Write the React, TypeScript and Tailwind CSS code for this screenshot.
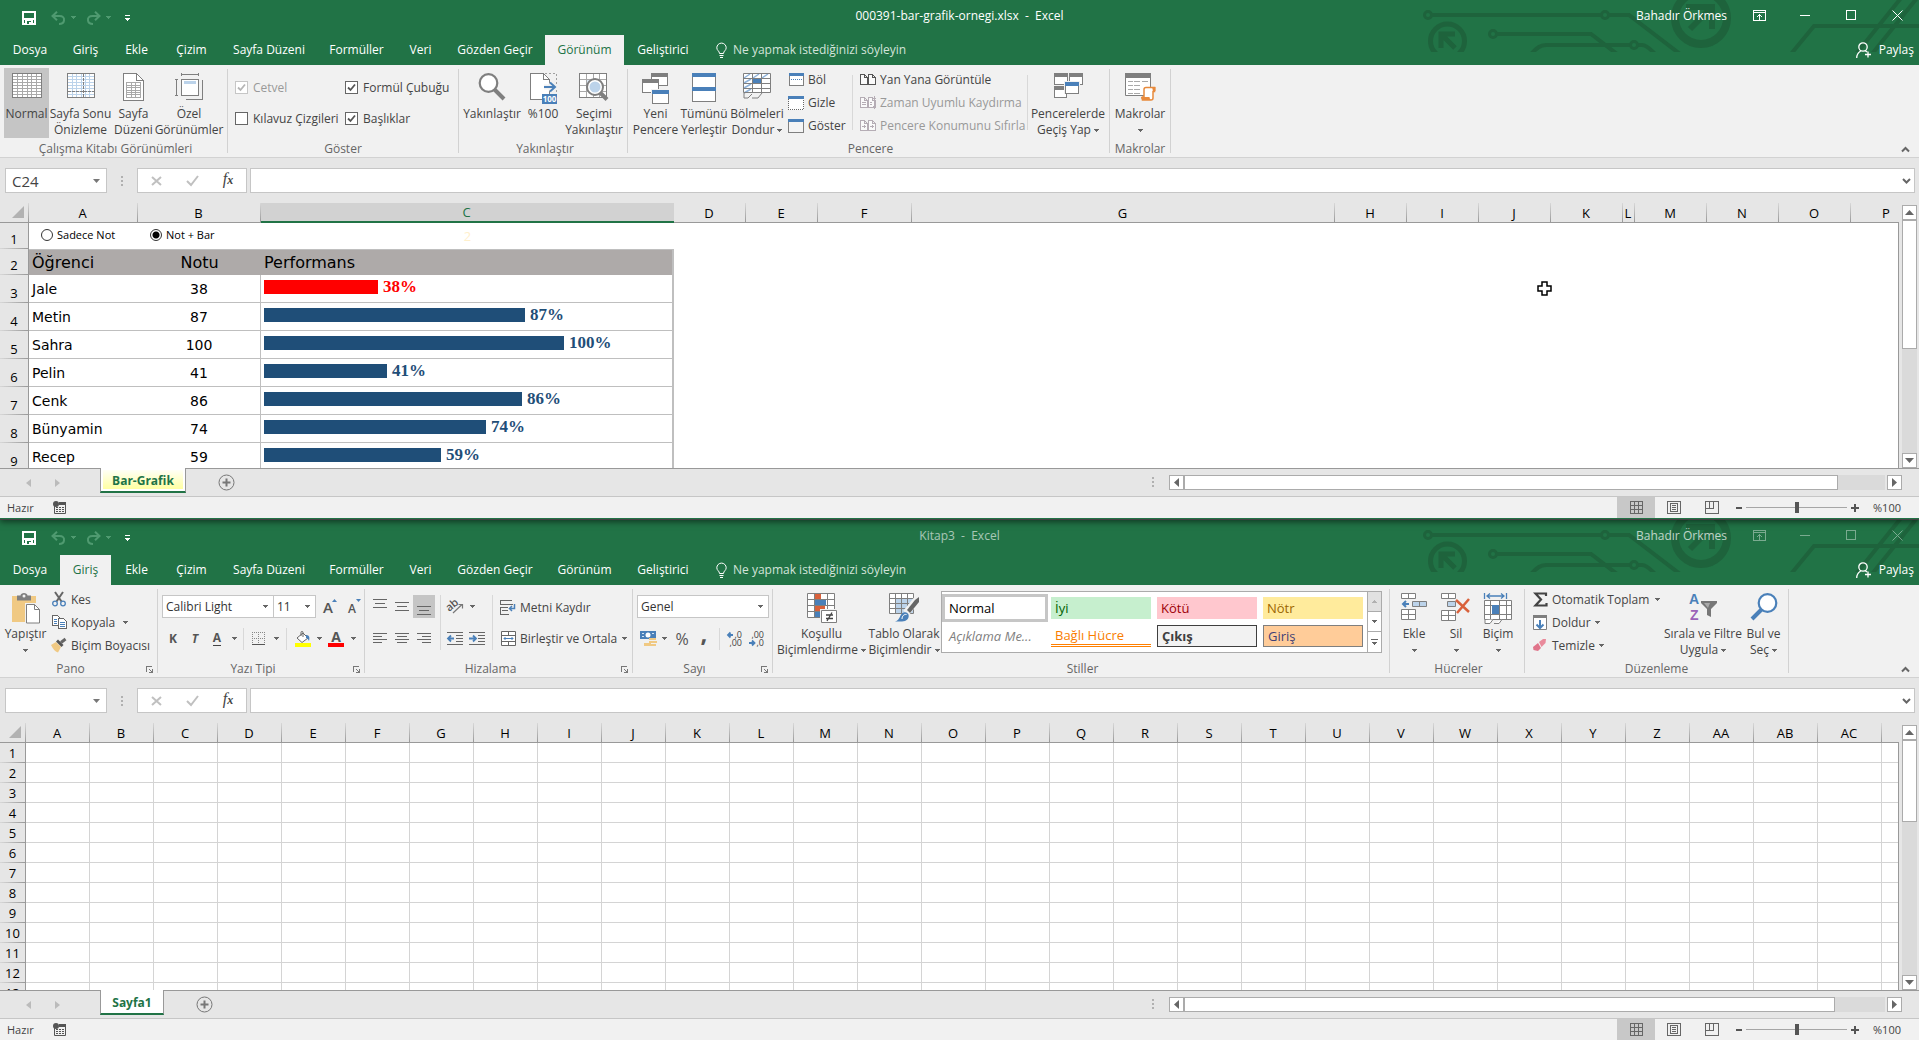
import React from "react";

type Kids = { children?: React.ReactNode };

/* ---------- drawing helpers ---------- */

function Svg({ w, h, crisp = true, children }: Kids & { w: number; h: number; crisp?: boolean }) {
  return (
    <svg
      width={w}
      height={h}
      viewBox={`0 0 ${w} ${h}`}
      fill="none"
      aria-hidden="true"
      className="shrink-0 overflow-visible"
      shapeRendering={crisp ? "crispEdges" : "auto"}
    >
      {children}
    </svg>
  );
}

const G = "#7f7f7f";
const B = "#4a80b9";

function Caret({ color = "#666" }: { color?: string }) {
  return (
    <Svg w={5} h={3}>
      <path d="M0 0h5v1h-1v1h-1v1h-1v-1h-1v-1h-1z" fill={color} />
    </Svg>
  );
}

function gridLines(x0: number, y0: number, x1: number, y1: number, cols: number, rows: number) {
  let d = "";
  for (let i = 1; i < cols; i++) {
    const x = Math.round(x0 + ((x1 - x0) * i) / cols - 0.5) + 0.5;
    d += `M${x} ${y0}V${y1}`;
  }
  for (let i = 1; i < rows; i++) {
    const y = Math.round(y0 + ((y1 - y0) * i) / rows - 0.5) + 0.5;
    d += `M${x0} ${y}H${x1}`;
  }
  return d;
}

/* ---------- title bar icons ---------- */

const SaveIcon = () => (
  <Svg w={14} h={14}>
    <path d="M1 1h12v12h-12zM2 8h10" stroke="#fff" strokeWidth={2} />
    <path d="M3 9h8v4h-8z" fill="#fff" />
    <path d="M5 10h4v3h-4z" fill="#217346" />
    <path d="M7 11h2v2h-2z" fill="#fff" />
  </Svg>
);

const UndoIcon = ({ flip = false }: { flip?: boolean }) => (
  <svg width="15" height="14" viewBox="0 0 15 14" fill="none" className={flip ? "-scale-x-100" : ""} aria-hidden="true">
    <path d="M1.500 5h7c3 0 5 1.500 4.500 4.500C12.700 11.500 10.500 13 8 13" stroke="#4f9a70" strokeWidth="2" />
    <path d="M6 0.800L1.500 5L6 9.200" stroke="#4f9a70" strokeWidth="2" />
  </svg>
);

const Circuit = () => (
  <svg width="496" height="52" viewBox="0 0 496 52" fill="none" stroke="#1e633c" aria-hidden="true">
    <g strokeWidth="4">
      <circle cx="5" cy="15" r="3.500" strokeWidth="3" />
      <circle cx="182" cy="15" r="3.500" strokeWidth="3" />
      <path d="M9 15H178M186 15H206L257 54" />
      <circle cx="70" cy="34" r="3.500" strokeWidth="3" />
      <path d="M74 34H168L194 54" />
      <path d="M108 54C114 48 117 45 123 45H207M215 45H219C224 45 228 50 232 54" />
      <circle cx="211" cy="45" r="3.500" strokeWidth="3" />
      <circle cx="24.500" cy="41" r="17" strokeWidth="5" />
      <path d="M18 48V34H32M18 34L32 48" strokeWidth="5" />
      <circle cx="278" cy="18" r="26" strokeWidth="8" />
      <path d="M263 7H289V29M288 8L267 29" strokeWidth="6" />
      <path d="M368 54L391 26H496" />
      <path d="M478 -2L433 54M494 -2L449 54" />
    </g>
  </svg>
);

/* ---------- ribbon: view tab icons ---------- */

const NormalViewIcon = () => (
  <Svg w={30} h={26}>
    <path d="M.5 .5h29v24h-29z" fill="#fff" stroke={G} />
    <path d={gridLines(1, 1, 29, 24, 6, 8)} stroke="#a9a9a9" />
  </Svg>
);
const PageBreakIcon = () => (
  <Svg w={28} h={26}>
    <path d="M.5 .5h27v24h-27z" fill="#fff" stroke={G} />
    <path d={gridLines(1, 1, 27, 24, 6, 8)} stroke="#bcd3ea" />
    <path d="M16.500 1V24M1 18.500H27" stroke={G} strokeDasharray="3 1" />
  </Svg>
);
const PageLayoutIcon = () => (
  <Svg w={21} h={28}>
    <path d="M.5 .5h13l7 7v19.500h-20z" fill="#fff" stroke={G} />
    <path d="M13.500 .5v7h7" stroke={G} />
    <path d="M3.500 9.500h14v15h-14z" stroke="#a9a9a9" />
    <path d={gridLines(4, 10, 17, 24, 3, 6)} stroke="#a9a9a9" />
  </Svg>
);
const CustomViewIcon = () => (
  <Svg w={29} h={28}>
    <path d="M6 1.500H24M6.500 0V3M23.500 0V3M1.500 6V23M0 6.500H3M0 22.500H3" stroke={G} />
    <path d="M11 26.500H27.500V7" stroke={G} />
    <path d="M6.500 6.500h17v16h-17z" fill="#fff" stroke={G} />
    <path d="M9 8h12v3h-12z" fill="#bcd3ea" />
  </Svg>
);
const GlassIcon = ({ color = G, flip = false }: { color?: string; flip?: boolean }) => (
  <svg width="28" height="28" viewBox="0 0 28 28" fill="none" className={flip ? "-scale-x-100" : ""} aria-hidden="true">
    <circle cx="10.500" cy="10" r="8.800" fill="#fff" stroke={color} strokeWidth="2.200" />
    <path d="M16.500 16.500L26 26" stroke={color} strokeWidth="4" />
  </svg>
);
const Zoom100Icon = () => (
  <svg width="27" height="31" viewBox="0 0 27 31" fill="none" className="overflow-visible" aria-hidden="true">
    <g shapeRendering="crispEdges">
      <path d="M.5 .5h13l6 6v20h-19z" fill="#fff" stroke={G} />
      <path d="M13.500 .5v6h6" stroke={G} />
      <path d="M15 .5h11.500v20" stroke="#a0a0a0" strokeDasharray="2 2" />
      <path d="M12 21h15v10h-15z" fill={B} />
    </g>
    <path d="M14 14h10M20 9.500l5 4.500l-5 4.500" stroke="#f1f1f1" strokeWidth="5" />
    <path d="M14 14h10M20 9.500l5 4.500l-5 4.500" stroke={B} strokeWidth="2" />
    <text x="19.500" y="29" textAnchor="middle" fontSize="8" fontWeight="700" fontFamily="Open Sans, sans-serif" fill="#fff">
      100
    </text>
  </svg>
);
const ZoomSelIcon = () => (
  <svg width="30" height="30" viewBox="0 0 30 30" fill="none" aria-hidden="true">
    <g shapeRendering="crispEdges">
      <path d="M.5 .5h27v24h-27z" fill="#fff" stroke={G} />
      <path d={gridLines(1, 1, 27, 24, 4, 4)} stroke="#a9a9a9" />
      <path d="M8 7h12v11h-12z" fill="#dbe7f4" />
    </g>
    <circle cx="16" cy="14" r="8" fill="#fff" stroke={G} strokeWidth="2" />
    <circle cx="16" cy="14" r="5.500" fill="#bcd3ea" />
    <path d="M21.500 20L28 26.500" stroke={G} strokeWidth="4" />
  </svg>
);
const Win = ({ x, y, w, h, c }: { x: number; y: number; w: number; h: number; c: string }) => (
  <g>
    <path d={`M${x} ${y}h${w}v${h}h-${w}z`} fill={G} />
    <path d={`M${x} ${y}h${w}v4h-${w}z`} fill={c} />
    <path d={`M${x + 1} ${y + 4}h${w - 2}v${h - 5}h-${w - 2}z`} fill="#fff" />
  </g>
);
const NewWindowIcon = () => (
  <Svg w={28} h={31}>
    <Win x={9} y={0} w={17} h={13} c={G} />
    <Win x={0} y={6} w={17} h={14} c={G} />
    <path d="M9 16h18v15h-18z" fill="#f1f1f1" />
    <Win x={10} y={17} w={17} h={14} c={B} />
  </Svg>
);
const ArrangeIcon = () => (
  <Svg w={24} h={29}>
    <path d="M0 0h24v29h-24z" fill={G} />
    <path d="M1 4h22v10h-22zM1 18h22v10h-22z" fill="#fff" />
    <path d="M0 0h24v4h-24zM0 14h24v4h-24z" fill={B} />
  </Svg>
);
const FreezeIcon = () => (
  <Svg w={29} h={27} crisp={false}>
    <path d="M.5 .5h27v19h-27z" fill="#fff" />
    <path d="M1 5l6-4M10 5l6-4M19 5l6-4M1 10l7-4M1 15l7-4M1 20l7-4" stroke="#8fb2d9" strokeWidth={1.500} />
    <path d="M.5 .5h27v19h-27zM.5 5.500h27M.5 10.500h27M.5 15.500h27M9.500 .5v19M18.500 .5v19" stroke={G} />
    <path d="M10 6h8v4h-8z" fill={B} />
    <path d="M1 20v5h4l4-4M9 25h6l4-5" stroke={G} />
  </Svg>
);
const SplitIcon = () => (
  <Svg w={15} h={13}>
    <path d="M.5 .5h14v12h-14z" fill="#fff" stroke={G} />
    <path d="M0 0h15v3h-15z" fill={B} />
    <path d="M2 6.500h11" stroke={B} strokeDasharray="1 1" />
  </Svg>
);
const HideIcon = () => (
  <Svg w={16} h={14}>
    <path d="M.5 3v10.500h15v-10" stroke="#666" strokeDasharray="1 1" fill="#fff" />
    <path d="M0 0h16v3h-16z" fill={B} />
  </Svg>
);
const ShowIcon = () => (
  <Svg w={16} h={14}>
    <path d="M.5 .5h15v13h-15z" fill="#f4f4f4" stroke={G} />
    <path d="M0 0h16v3h-16z" fill={B} />
  </Svg>
);
const SideBySideIcon = ({ c = "#555", kind = 0 }: { c?: string; kind?: number }) => (
  <Svg w={16} h={13}>
    <path d="M.5 1.500h4l3 3v7h-7zM8.500 1.500h4l3 3v7h-7zM4.500 1.500v3h3M12.500 1.500v3h3" stroke={c} fill="#fafafa" />
    {kind === 1 && <path d="M2 6.500h4M2 8.500h4M10 6.500h2M10 8.500h2M14.500 0v13M13 2.500h3M13 10.500h3" stroke={c} />}
    {kind === 2 && <path d="M2 7.500h4M4 6v3M10 7.500h4M12 6v3" stroke={c} />}
  </Svg>
);
const SwitchIcon = () => (
  <Svg w={29} h={26}>
    <Win x={0} y={0} w={14} h={12} c={G} />
    <Win x={15} y={0} w={14} h={12} c={G} />
    <Win x={0} y={13} w={13} h={12} c={G} />
    <path d="M10 8h16v13h-16z" fill="#f1f1f1" />
    <Win x={11} y={9} w={14} h={12} c={B} />
  </Svg>
);
const MacroIcon = () => (
  <Svg w={31} h={28} crisp={false}>
    <path d="M.5 .5h25v22h-25z" fill="#fff" stroke={G} />
    <path d="M0 0h26v5h-26z" fill={G} />
    <path d="M3 8.500h5M9 8.500h6M17 8.500h6M3 12.500h5M9 12.500h6M3 16.500h5M9 16.500h6M3 20.500h5M9 20.500h6" stroke="#a9a9a9" />
    <path d="M19 24V16.500c0-1 .5-2 2-2h8.500v4H28V25c0 1-.5 2-2 2H17.500v-3z" fill="#fff" stroke="#e88a3c" strokeWidth={1.500} />
    <path d="M16 24h8.500c0 1 .5 2.500 1.500 3h-8c-1.500 0-2-1.500-2-3zM27 14h3.500v4H28z" fill="#e88a3c" />
  </Svg>
);

/* ---------- ribbon: home tab icons ---------- */

const PasteIcon = () => (
  <Svg w={28} h={31} crisp={false}>
    <path d="M0 3h24v26h-24z" fill="#f0c983" />
    <path d="M5 2.500h3.500c0-3.500 7-3.500 7 0H19v5h-14z" fill={G} />
    <circle cx="12" cy="3" r="1.500" fill="#f1f1f1" />
    <path d="M13 10h15v21h-15z" fill="#f1f1f1" />
    <path d="M14.500 11.500h8l5 5v13.500h-13z" fill="#fff" stroke={G} />
    <path d="M22.500 11.500v5h5" stroke={G} />
  </Svg>
);
const CutIcon = () => (
  <Svg w={14} h={15} crisp={false}>
    <path d="M3 0L9.500 9.500M11 0L4.500 9.500" stroke="#666" strokeWidth={2} />
    <circle cx="3" cy="11.500" r="2.300" stroke={B} strokeWidth={1.300} />
    <circle cx="11" cy="11.500" r="2.300" stroke={B} strokeWidth={1.300} />
  </Svg>
);
const CopyIcon = () => (
  <Svg w={15} h={15}>
    <path d="M.5 .5h5l3 3v7h-8z" fill="#fff" stroke="#666" />
    <path d="M2 4.500h3M2 6.500h3M2 8.500h3" stroke={B} />
    <path d="M6.500 3.500h5l3 3v7h-8z" fill="#fff" stroke="#666" />
    <path d="M8 7.500h5M8 9.500h5M8 11.500h5" stroke={B} />
  </Svg>
);
const BrushIcon = () => (
  <Svg w={16} h={15} crisp={false}>
    <path d="M0 7l5-3l5 5l-3 5.500c-3-1-5-3.500-7-7.500z" fill="#f0c983" />
    <path d="M5 3.500L10.500 9l2-2L7 1.500z" fill="#555" />
    <path d="M10 4.500L14.500 1" stroke="#666" strokeWidth={3} />
  </Svg>
);
const GrowFont = ({ up = false }: { up?: boolean }) => (
  <Svg w={14} h={17} crisp={false}>
    <text x="0" y={15} fontSize={up ? 15 : 12} fontWeight="600" fontFamily="Open Sans, sans-serif" fill="#555">
      A
    </text>
    <path d={up ? "M9 4l2.500-3l2.500 3z" : "M8 1l2.500 3l2.500-3z"} fill={B} />
  </Svg>
);
const BordersIcon = () => (
  <Svg w={14} h={13}>
    <path d="M0 .5h13M.5 0v12M6.500 0v12M12.500 0v12M0 6.500h13" stroke="#888" strokeDasharray="1 1" />
    <path d="M0 12.500h13" stroke="#555" />
  </Svg>
);
const FillIcon = () => (
  <Svg w={16} h={16} crisp={false}>
    <path d="M2 7l6-5l5 5l-6 4.500z" fill="#fff" stroke="#666" />
    <path d="M6 5V1.500c0-1.500 2-1.500 2 0V6" stroke="#666" />
    <path d="M11 4c3 0 4 2 3 6c-1-2-1.500-3-3-3z" fill={B} />
    <path d="M0 12h16v4h-16z" fill="#ffff00" />
  </Svg>
);
const FontColorIcon = () => (
  <Svg w={16} h={16} crisp={false}>
    <text x="8" y="11" textAnchor="middle" fontSize="14" fontWeight="700" fontFamily="Open Sans, sans-serif" fill="#555">
      A
    </text>
    <path d="M0 12h16v4h-16z" fill="#ff0000" />
  </Svg>
);
const LinesIcon = ({ d }: { d: string }) => (
  <Svg w={14} h={13}>
    <path d={d} stroke="#666" />
  </Svg>
);
const vTop = "M0 -.5h14M2 3.500h10M0 7.500h14";
const vMid = "M0 2.500h14M2 6.500h10M0 10.500h14";
const vBot = "M0 6.500h14M2 10.500h10M0 14.500h14";
const hLeft = "M0 1.500h14M0 4.500h9M0 7.500h14M0 10.500h9";
const hMid = "M0 1.500h14M2 4.500h10M0 7.500h14M2 10.500h10";
const hRight = "M0 1.500h14M5 4.500h9M0 7.500h14M5 10.500h9";
const OrientIcon = () => (
  <Svg w={17} h={15} crisp={false}>
    <text x="0" y="11" fontSize="11" fontWeight="600" fontFamily="Open Sans, sans-serif" fill="#555" transform="rotate(-40 4 9)">
      ab
    </text>
    <path d="M6 14L15 5.500M11.500 5.500h4v4" stroke="#777" strokeWidth={1.200} />
  </Svg>
);
const IndentIcon = ({ right = false }: { right?: boolean }) => (
  <Svg w={16} h={13} crisp={false}>
    <path d="M0 .5h16M9 3.500h7M9 6.500h7M9 9.500h7M0 12.500h16" stroke="#666" />
    <path d={right ? "M0 6.500h6M4 3.500l3 3l-3 3" : "M1 6.500h6M4 3.500l-3 3l3 3"} stroke={B} strokeWidth={1.800} />
  </Svg>
);
const WrapIcon = () => (
  <Svg w={16} h={15} crisp={false}>
    <path d="M.5 0v5M0 .5h12M0 4.500h13M.5 7v8M0 7.500h8M2 10.500h6M0 14.500h9" stroke="#666" />
    <path d="M14.500 4v4.500h-5M12 6l-2.500 2.500l2.500 2.500" stroke={B} strokeWidth={1.500} />
  </Svg>
);
const MergeIcon = () => (
  <Svg w={15} h={15} crisp={false}>
    <path d="M.5 .5h14v14h-14zM.5 4.500h14M.5 10.500h14M7.500 .5v4M7.500 10.500v4" stroke="#666" fill="#fff" />
    <path d="M3 7.500h9M4.500 6l-1.500 1.500l1.500 1.500M10.500 6l1.500 1.500l-1.500 1.500" stroke={B} />
  </Svg>
);
const MoneyIcon = () => (
  <Svg w={17} h={16} crisp={false}>
    <path d="M0 0h16v8h-16z" fill={B} />
    <path d="M2 2h2v1h-2zM12 2h2v1h-2zM2 5h2v1h-2z" fill="#d6e4f2" />
    <circle cx="8" cy="4" r="2.500" fill="#fff" />
    <path d="M4 12h7v3h-7zM9 7h7v2h-7zM9 10h8v2h-8zM9 13h7v2h-7z" fill="#f0c983" />
  </Svg>
);
const DecimalIcon = ({ more = false }: { more?: boolean }) => (
  <svg width="16" height="16" viewBox="0 0 16 16" fill="none" className="overflow-visible" aria-hidden="true">
    <g fontFamily="Open Sans, sans-serif" fontSize="9" fill="#444">
      <text x="15" y="7" textAnchor="end">{more ? ",0" : ",00"}</text>
      <text x="15" y="15" textAnchor="end">{more ? ",00" : ",0"}</text>
    </g>
    <path
      d={more ? "M1 4h5M3.500 1.500L1 4l2.500 2.500" : "M0 12h5M3 9.500L5.500 12L3 14.500"}
      stroke={B}
      strokeWidth="1.800"
    />
  </svg>
);
const CondIcon = () => (
  <Svg w={30} h={31} crisp={false}>
    <path d="M.5 .5h27v24h-27z" fill="#fff" />
    <path d="M8 1h6v5h-6zM8 13h10v5h-10z" fill="#d9613b" />
    <path d="M8 7h11v5h-11zM8 19h5v5h-5z" fill={B} />
    <path d="M.5 .5h27v24h-27zM.5 6.500h27M.5 12.500h27M.5 18.500h27M7.500 .5v24M20.500 .5v24" stroke={G} />
    <path d="M13 16h17v15h-17z" fill="#f1f1f1" />
    <path d="M14.500 17.500h15v12h-15z" fill="#fff" stroke={G} />
    <path d="M19 22h7M19 25.500h7M25 19.500l-5 8.500" stroke="#444" strokeWidth={1.300} />
  </Svg>
);
const TableFmtIcon = () => (
  <Svg w={30} h={29} crisp={false}>
    <path d="M.5 .5h24v20h-24z" fill="#fff" />
    <path d="M7 5h17v15h-17z" fill="#bcd3ea" />
    <path d="M.5 .5h24v20h-24zM.5 5.500h24M.5 10.500h24M.5 15.500h24M6.500 .5v20M12.500 .5v20M18.500 .5v20" stroke={G} />
    <path d="M27.500 7L17 20" stroke="#f1f1f1" strokeWidth={7} />
    <path d="M30 4v5l-9 11l-3-3l8-10z" fill="#666" />
    <path d="M6 28.500c3-.5 4-3 5.500-6c2-3.500 6-4.500 8-1c1 4-2 7-6.500 7z" fill={B} />
    <path d="M13 26c0-3 2-5 4.500-4.500" stroke="#fff" />
  </Svg>
);
const Cells = ({ x, y, h = 5, rows = 1 }: { x: number; y: number; h?: number; rows?: number }) => (
  <path
    d={`M${x + 0.5} ${y + 0.5}h14v${h * rows}h-14zM${x + 7.5} ${y + 0.5}v${h * rows}${rows > 1 ? `M${x + 0.5} ${y + h + 0.5}h14` : ""}`}
    fill="#fff"
    stroke={G}
  />
);
const InsertIcon = () => (
  <Svg w={27} h={28} crisp={false}>
    <Cells x={0} y={0} />
    <Cells x={0} y={16} rows={2} />
    <path d="M11.500 8.500h14v5h-14zM18.500 8.500v5" fill="#bcd3ea" stroke={G} />
    <path d="M2 11h6M5 8l-3 3l3 3" stroke={B} strokeWidth={2} />
  </Svg>
);
const DeleteIcon = () => (
  <Svg w={30} h={29} crisp={false}>
    <Cells x={0} y={0} />
    <Cells x={0} y={17} rows={2} />
    <path d="M6.500 8.500h8v5h-8z" fill="#bcd3ea" stroke={G} />
    <path d="M15 7L28 19M28 6L16 20" stroke="#d9613b" strokeWidth={2.500} />
  </Svg>
);
const FormatIcon = () => (
  <Svg w={28} h={31} crisp={false}>
    <path d="M.5 0v6M22.500 0v6M3 3h17M6 .5l-3 2.500l3 2.500M17 .5l3 2.500l-3 2.500" stroke={B} strokeWidth={1.300} />
    <path d="M.5 7.500h27v19h-27zM.5 12.500h27M.5 21.500h27M6.500 7.500v19M15.500 7.500v19M22.500 7.500v19" stroke={G} fill="#fff" />
    <path d="M8 12h7v9h-7z" fill={B} />
    <path d="M1 27v3.500h5l3-4M10 30.500h5l3-4" stroke={G} fill="#fff" />
  </Svg>
);
const SigmaIcon = () => (
  <Svg w={15} h={15} crisp={false}>
    <path d="M13 4V1.500H2.500L8 7.500L2.500 13.500H13.500V11" stroke="#444" strokeWidth={2.200} />
  </Svg>
);
const FillDownIcon = () => (
  <Svg w={14} h={15} crisp={false}>
    <path d="M.5 .5h13v14h-13z" fill="#fff" stroke={G} />
    <path d="M0 0h14v3h-14z" fill={G} />
    <path d="M7 5v8M3.500 9.500L7 13l3.500-3.500" stroke={B} strokeWidth={2} />
  </Svg>
);
const EraserIcon = () => (
  <Svg w={14} h={13} crisp={false}>
    <path d="M6 3l4-3h3l-.5 4l-4 4z" fill="#e98a9b" />
    <path d="M5 4L8 9L5 12L.5 11L0 8z" fill="#e0748a" />
  </Svg>
);
const SortIcon = () => (
  <Svg w={30} h={29} crisp={false}>
    <g fontFamily="Liberation Sans, sans-serif" fontSize="14" fontWeight="700">
      <text x="1" y="11" fill={B}>A</text>
      <text x="2" y="27" fill="#9b62b8">Z</text>
    </g>
    <path d="M13 8h16v2l-6 6v8l-4-2v-6l-6-6z" fill="#777" />
    <path d="M16 10h6l-2 5z" fill="#aaa" />
  </Svg>
);

/* ---------- ribbon building blocks ---------- */

function Group({ label, width, launcher = false, children }: Kids & { label: string; width: string; launcher?: boolean }) {
  return (
    <>
      <section aria-label={label} className={`flex shrink-0 flex-col ${width}`}>
        <div className="flex h-[76px] items-start pt-[3px]">{children}</div>
        <div className="flex h-4 items-center text-[#666]">
          <span className="flex-1 text-center">{label}</span>
          {launcher && (
            <button aria-label={`${label} ayarları`} className="flex w-4 justify-center">
              <Svg w={7} h={7}>
                <path d="M.5 6V.5H6M3 3l3 3M6.500 3v3.500H3" stroke="#777" />
              </Svg>
            </button>
          )}
        </div>
      </section>
      <div className="my-1 w-px shrink-0 bg-[#d2d2d2]" />
    </>
  );
}

function Big({
  icon,
  lines,
  width,
  caret,
  active = false,
}: {
  icon: React.ReactNode;
  lines: string[];
  width: string;
  caret?: boolean;
  active?: boolean;
}) {
  return (
    <button
      aria-pressed={active || undefined}
      className={`flex h-[70px] shrink-0 flex-col items-center pt-1 whitespace-nowrap text-[#444] ${width} ${active ? "bg-[#c5c5c5]" : ""}`}
    >
      <span className="flex h-[34px] items-start justify-center pt-px">{icon}</span>
      <span className="flex h-4 items-center">{lines[0]}</span>
      {(lines[1] || caret) && (
        <span className="flex h-4 items-center gap-[3px]">
          {lines[1]}
          {caret && <Caret />}
        </span>
      )}
    </button>
  );
}

function Small({ icon, text, caret, disabled }: { icon: React.ReactNode; text: string; caret?: string; disabled?: boolean }) {
  return (
    <button disabled={disabled} className={`flex h-[23px] items-center gap-1 whitespace-nowrap ${disabled ? "text-[#999]" : "text-[#444]"}`}>
      <span className="flex w-4 justify-center">{icon}</span>
      {text}
      {caret !== undefined && (
        <span className={caret}>
          <Caret />
        </span>
      )}
    </button>
  );
}

function Check({ label, checked, disabled }: { label: string; checked?: boolean; disabled?: boolean }) {
  return (
    <label className={`flex h-[31px] items-center gap-[5px] whitespace-nowrap ${disabled ? "text-[#999]" : "text-[#444]"}`}>
      <span className="grid size-[13px]">
        <input
          type="checkbox"
          defaultChecked={checked}
          disabled={disabled}
          className="peer size-[13px] appearance-none border border-[#666] bg-white [grid-area:1/1] disabled:border-[#c6c6c6]"
        />
        <svg viewBox="0 0 13 13" fill="none" className="pointer-events-none hidden size-[13px] [grid-area:1/1] peer-checked:block" aria-hidden="true">
          <path d="M3 6.500L5.500 9L10 3.500" stroke={disabled ? "#b5b5b5" : "#555"} strokeWidth="1.800" />
        </svg>
      </span>
      {label}
    </label>
  );
}

function Combo({ label, value, width }: { label: string; value: string; width: string }) {
  return (
    <span className={`grid h-[23px] items-center border border-[#c6c6c6] bg-white ${width}`}>
      <select aria-label={label} className="h-full w-full appearance-none px-[3px] text-[#333] [grid-area:1/1]">
        <option>{value}</option>
      </select>
      <span className="pointer-events-none justify-self-end pr-[5px] [grid-area:1/1]">
        <Caret />
      </span>
    </span>
  );
}

function Tool({ label, width, active, children }: Kids & { label: string; width: string; active?: boolean }) {
  return (
    <button aria-label={label} className={`flex h-[23px] shrink-0 items-center justify-center text-[#555] ${width} ${active ? "bg-[#c5c5c5]" : ""}`}>
      {children}
    </button>
  );
}

const Sep = ({ cls }: { cls: string }) => <div className={`w-px shrink-0 bg-[#d8d8d8] ${cls}`} />;

/* ---------- window chrome ---------- */

const tabs: [string, string][] = [
  ["Dosya", "w-[60px]"],
  ["Giriş", "w-[51px]"],
  ["Ekle", "w-[51px]"],
  ["Çizim", "w-[59px]"],
  ["Sayfa Düzeni", "w-[96px]"],
  ["Formüller", "w-[79px]"],
  ["Veri", "w-[49px]"],
  ["Gözden Geçir", "w-[100px]"],
  ["Görünüm", "w-[79px]"],
  ["Geliştirici", "w-[78px]"],
];

function TitleBar({ title, dim, active }: { title: string; dim?: boolean; active: string }) {
  return (
    <header className="relative h-[65px] shrink-0 bg-[#217346] text-white">
      <div className="pointer-events-none absolute top-0 right-0">
        <Circuit />
      </div>
      <div className="relative grid h-[35px] grid-cols-[1fr_auto_1fr] items-center">
        <div className="flex items-center pl-[22px]">
          <button aria-label="Kaydet"><SaveIcon /></button>
          <button aria-label="Geri Al" className="ml-[15px] flex items-center gap-[5px]">
            <UndoIcon />
            <Caret color="#4f9a70" />
          </button>
          <button aria-label="Yinele" className="ml-2.5 flex items-center gap-[5px]">
            <UndoIcon flip />
            <Caret color="#4f9a70" />
          </button>
          <button aria-label="Hızlı Erişim Araç Çubuğunu Özelleştir" className="ml-3.5">
            <Svg w={5} h={6}>
              <path d="M0 .5h5" stroke="#fff" />
              <path d="M0 3h5v1h-1v1h-1v1h-1v-1h-1v-1h-1z" fill="#fff" />
            </Svg>
          </button>
        </div>
        <h1 className={`pb-[3px] whitespace-pre ${dim ? "opacity-60" : ""}`}>{title}{"  -  "}Excel</h1>
        <div className="flex items-center justify-end pr-4 pb-1">
          <span className={`mr-[26px] ${dim ? "opacity-70" : ""}`}>Bahadır Örkmes</span>
          <div className={`flex items-center ${dim ? "opacity-40" : ""}`}>
            <button aria-label="Şerit Görüntüleme Seçenekleri" className="mr-[34px]">
              <Svg w={13} h={11}>
                <path d="M.5 .5h12v10h-12zM1 2.500h11M6.500 4v6M4 6.500h1M5 5.500h1M8 6.500h1M7 5.500h1" stroke="#fff" />
              </Svg>
            </button>
            <button aria-label="Simge Durumuna Küçült" className="mr-9">
              <Svg w={10} h={11}><path d="M0 5.500h10" stroke="#fff" /></Svg>
            </button>
            <button aria-label="Ekranı Kapla" className="mr-9">
              <Svg w={10} h={11}><path d="M.5 .5h9v9h-9z" stroke="#fff" /></Svg>
            </button>
            <button aria-label="Kapat">
              <Svg w={11} h={11} crisp={false}><path d="M.5 .5l10 10M10.500 .5l-10 10" stroke="#fff" /></Svg>
            </button>
          </div>
        </div>
      </div>
      <nav className="relative flex h-[30px] items-center">
        {tabs.map(([name, width]) => (
          <button
            key={name}
            aria-current={name === active ? "page" : undefined}
            className={`h-full shrink-0 whitespace-nowrap ${width} ${name === active ? "bg-[#f1f1f1] text-[#217346]" : ""}`}
          >
            {name}
          </button>
        ))}
        <button className="ml-[14px] flex items-center gap-1.5 whitespace-nowrap text-[#d3e3da]">
          <Svg w={11} h={15} crisp={false}>
            <path d="M3.500 10.500C3.500 8 .8 7.500 .8 4.800a4.700 4.700 0 0 1 9.400 0C10.200 7.500 7.500 8 7.500 10.500zM3.500 12.500h4M4 14.500h3" stroke="#fff" />
          </Svg>
          Ne yapmak istediğinizi söyleyin
        </button>
        <button className="ml-auto flex items-center gap-[7px] pr-[5px]">
          <Svg w={16} h={16} crisp={false}>
            <circle cx="7" cy="5" r="4.200" stroke="#fff" strokeWidth={1.300} />
            <path d="M.7 16c0-3.500 1.500-5.500 4-7M12 9.500v6M9 12.500h6M9 8.500l2 1.500" stroke="#fff" strokeWidth={1.300} />
          </Svg>
          Paylaş
        </button>
      </nav>
    </header>
  );
}

function Ribbon({ children }: Kids) {
  return (
    <div className="flex shrink-0 border-b border-[#d2d2d2] bg-[#f1f1f1]">
      {children}
      <button aria-label="Şeridi Daralt" className="mt-auto mr-[9px] mb-1 ml-auto">
        <Svg w={9} h={7} crisp={false}><path d="M1 5.500L4.500 2L8 5.500" stroke="#666" strokeWidth={2} /></Svg>
      </button>
    </div>
  );
}

function FormulaBar({ cell }: { cell: string }) {
  return (
    <div className="flex h-[45px] shrink-0 items-start bg-[#e6e6e6] pt-2.5 pr-1 pl-[5px]">
      <span className="flex h-[25px] w-[102px] shrink-0 items-center border border-[#c6c6c6] bg-white">
        <input aria-label="Ad Kutusu" defaultValue={cell} className="w-0 flex-1 px-1.5 text-[15px] text-[#444] outline-none" />
        <button aria-label="Ad listesi" className="pr-1.5">
          <Svg w={7} h={4} crisp={false}><path d="M0 0h7l-3.500 4z" fill="#777" /></Svg>
        </button>
      </span>
      <span className="flex h-[25px] w-[30px] shrink-0 items-center justify-center">
        <Svg w={2} h={10}><path d="M0 0h2v2h-2zM0 4h2v2h-2zM0 8h2v2h-2z" fill="#b0b0b0" /></Svg>
      </span>
      <span className="flex h-[25px] w-[110px] shrink-0 items-center border border-[#c6c6c6] bg-white">
        <button aria-label="İptal" className="flex w-9 justify-center">
          <Svg w={11} h={10} crisp={false}><path d="M1 1l9 8M10 1l-9 8" stroke="#c0c0c0" strokeWidth={2} /></Svg>
        </button>
        <button aria-label="Gir" className="flex w-9 justify-center">
          <Svg w={13} h={11} crisp={false}><path d="M1 6l4 4L12 1" stroke="#c0c0c0" strokeWidth={2} /></Svg>
        </button>
        <button aria-label="İşlev Ekle" className="w-9 pb-0.5 text-center font-['Liberation_Serif',serif] text-base leading-4 text-[#444] italic">
          f<span className="text-xs font-bold">x</span>
        </button>
      </span>
      <span className="ml-[3px] flex h-[25px] flex-1 items-center border border-[#c6c6c6] bg-white">
        <input aria-label="Formül Çubuğu" className="flex-1 px-1 text-sm outline-none" />
        <button aria-label="Formül Çubuğunu Genişlet" className="pr-[3px]">
          <Svg w={9} h={6} crisp={false}><path d="M1 1L4.500 4.500L8 1" stroke="#666" strokeWidth={2} /></Svg>
        </button>
      </span>
    </div>
  );
}

const Tri = ({ d }: { d: string }) => (
  <Svg w={9} h={9} crisp={false}><path d={d} fill="#666" /></Svg>
);

function VScroll({ thumb }: { thumb: string }) {
  const btn = "flex h-[15px] shrink-0 items-center justify-center border border-[#ababab] bg-white";
  return (
    <div className="ml-[3px] flex w-[15px] shrink-0 flex-col pt-0.5">
      <button aria-label="Yukarı kaydır" className={btn}><Tri d="M0 7h9L4.500 2z" /></button>
      <div className="flex-1 bg-[#dadada]">
        <div className={`border border-[#ababab] bg-white ${thumb}`} />
      </div>
      <button aria-label="Aşağı kaydır" className={btn}><Tri d="M0 2h9L4.500 7z" /></button>
    </div>
  );
}

function SheetBar({ name, tabCls, thumbGap, plusGap }: { name: string; tabCls: string; thumbGap: string; plusGap: string }) {
  return (
    <div className="flex h-[29px] shrink-0 items-start border-b border-[#c6c6c6] bg-[#e6e6e6]">
      <div className="flex h-full w-[100px] shrink-0 items-center gap-6 border-t border-[#999] pl-[26px]">
        <button aria-label="Önceki sayfa"><Svg w={5} h={8} crisp={false}><path d="M5 0v8L0 4z" fill="#bbb" /></Svg></button>
        <button aria-label="Sonraki sayfa"><Svg w={5} h={8} crisp={false}><path d="M0 0v8L5 4z" fill="#bbb" /></Svg></button>
      </div>
      <button className={`h-[25px] shrink-0 border-x border-b-2 border-x-[#999] border-b-[#217346] pt-0.5 font-bold text-[#217346] ${tabCls}`}>{name}</button>
      <div className="flex h-full flex-1 items-center border-t border-[#999]">
        <button aria-label="Yeni sayfa" className={plusGap}>
          <Svg w={17} h={17} crisp={false}>
            <circle cx="8.500" cy="8.500" r="7.500" stroke="#777" />
            <path d="M8.500 4.500v8M4.500 8.500h8" stroke="#777" strokeWidth={2} />
          </Svg>
        </button>
      </div>
      <div className="flex h-full w-[767px] shrink-0 items-center border-t border-[#999]">
        <span className="flex w-[17px] shrink-0">
          <Svg w={2} h={11}><path d="M0 0h2v2h-2zM0 4h2v2h-2zM0 8h2v2h-2z" fill="#b0b0b0" /></Svg>
        </span>
        <button aria-label="Sola kaydır" className="flex size-[15px] items-center justify-center border border-[#ababab] bg-white">
          <Tri d="M7 0v9L2 4.500z" />
        </button>
        <div className={`flex h-[15px] flex-1 bg-[#dadada] ${thumbGap}`}>
          <div className="flex-1 border border-[#ababab] bg-white" />
        </div>
        <button aria-label="Sağa kaydır" className="mr-[17px] flex size-[15px] items-center justify-center border border-[#ababab] bg-white">
          <Tri d="M2 0v9L7 4.500z" />
        </button>
      </div>
    </div>
  );
}

function StatusBar() {
  return (
    <footer className="flex h-[21px] shrink-0 items-center bg-[#f1f1f1] pl-[7px] text-[11px] text-[#444]">
      Hazır
      <span className="ml-[19px]">
        <Svg w={14} h={13} crisp={false}>
          <path d="M1.500 5v7.500h11V1.500H6" stroke="#555" />
          <path d="M6 1h7v3h-7z" fill="#555" />
          <circle cx="3" cy="3" r="3" fill="#555" />
          <path d="M3 6.500h8M3 8.500h8M3 10.500h8" stroke="#555" strokeDasharray="2 1" />
        </Svg>
      </span>
      <div className="ml-auto flex h-full items-center">
        <button aria-label="Normal" aria-pressed="true" className="flex h-full w-[38px] items-center justify-center bg-[#c8c8c8]">
          <Svg w={13} h={13}><path d="M.5 .5h12v12h-12zM4.500 0v13M8.500 0v13M0 4.500h13M0 8.500h13" stroke="#666" /></Svg>
        </button>
        <button aria-label="Sayfa Düzeni" className="flex w-[38px] justify-center">
          <Svg w={14} h={13}><path d="M.5 .5h13v12h-13zM3.500 2.500h7v8h-7zM5 4.500h4M5 6.500h4M5 8.500h4" stroke="#666" /></Svg>
        </button>
        <button aria-label="Sayfa Sonu Önizleme" className="flex w-[38px] justify-center">
          <Svg w={14} h={13}><path d="M.5 .5h13v12h-13zM.5 7.500h8v-7M4.500 0v7" stroke="#666" /></Svg>
        </button>
        <button aria-label="Uzaklaştır" className="ml-[5px]"><Svg w={6} h={9}><path d="M0 5h6" stroke="#555" strokeWidth={2} /></Svg></button>
        <span className="mx-1 grid h-[21px] w-[101px] items-center">
          <span className="h-px bg-[#a6a6a6] [grid-area:1/1]" />
          <input
            type="range"
            aria-label="Yakınlaştırma"
            defaultValue={50}
            className="h-3 w-full appearance-none bg-transparent [grid-area:1/1] [&::-webkit-slider-thumb]:h-[11px] [&::-webkit-slider-thumb]:w-1 [&::-webkit-slider-thumb]:appearance-none [&::-webkit-slider-thumb]:bg-[#555]"
          />
        </span>
        <button aria-label="Yakınlaştır"><Svg w={8} h={8}><path d="M0 4h8M4 0v8" stroke="#555" strokeWidth={2} /></Svg></button>
        <span className="mr-[18px] ml-3.5">%100</span>
      </div>
    </footer>
  );
}

/* ---------- sheets ---------- */

const colLine = "bg-[linear-gradient(to_bottom,#d8d8d8,#999)] bg-[length:1px_100%] bg-right bg-no-repeat";
const rowLine = "bg-[linear-gradient(to_right,#d8d8d8,#999)] bg-[length:100%_1px] bg-bottom bg-no-repeat";

const Corner = () => (
  <th className="h-5 border-b border-b-[#999] bg-[#e6e6e6] p-0">
    <div className={`flex h-[19px] items-end justify-end pr-[5px] pb-1 ${colLine}`}>
      <Svg w={12} h={12} crisp={false}><path d="M12 0v12H0z" fill="#b2b2b2" /></Svg>
    </div>
  </th>
);

const columns1: [string, string][] = [
  ["A", "w-[109px]"],
  ["B", "w-[123px]"],
  ["C", "w-[413px]"],
  ["D", "w-[72px]"],
  ["E", "w-[72px]"],
  ["F", "w-[94px]"],
  ["G", "w-[423px]"],
  ["H", "w-[72px]"],
  ["I", "w-[72px]"],
  ["J", "w-[72px]"],
  ["K", "w-[72px]"],
  ["L", "w-[12px]"],
  ["M", "w-[72px]"],
  ["N", "w-[72px]"],
  ["O", "w-[72px]"],
  ["P", "w-[72px]"],
];

const students: [string, number][] = [
  ["Jale", 38],
  ["Metin", 87],
  ["Sahra", 100],
  ["Pelin", 41],
  ["Cenk", 86],
  ["Bünyamin", 74],
  ["Recep", 59],
];

const PX_PER_POINT = 3;

const rowHead1 = `border-r border-r-[#999] bg-[#e6e6e6] p-0 align-bottom text-[13px] leading-5 font-normal ${rowLine}`;

function Radio({ label, checked }: { label: string; checked?: boolean }) {
  return (
    <label className="flex items-center gap-1 pb-0.5 pl-3 text-[11px] whitespace-nowrap">
      <input
        type="radio"
        name="gorunum"
        defaultChecked={checked}
        className="size-3 appearance-none rounded-full border border-[#333] bg-white checked:bg-[radial-gradient(circle,#000_0_3px,#fff_4px)]"
      />
      {label}
    </label>
  );
}

function GradeSheet() {
  return (
    <table className="w-[1923px] table-fixed border-separate border-spacing-0 text-black">
      <colgroup>
        <col className="w-[29px]" />
        {columns1.map(([c, w]) => (
          <col key={c} className={w} />
        ))}
      </colgroup>
      <thead>
        <tr>
          <Corner />
          {columns1.map(([c]) => (
            <th
              key={c}
              scope="col"
              className={`h-5 p-0 pr-0.5 text-[13px] leading-[18px] font-normal ${
                c === "C" ? "border-b-2 border-b-[#217346] bg-[#d2d2d2] text-[#217346]" : `border-b border-b-[#999] bg-[#e6e6e6] ${colLine}`
              }`}
            >
              {c}
            </th>
          ))}
        </tr>
      </thead>
      <tbody>
        <tr>
          <th scope="row" className={`h-[26px] ${rowHead1}`}>1</th>
          <td className="p-0"><Radio label="Sadece Not" /></td>
          <td className="p-0"><Radio label="Not + Bar" checked /></td>
          <td className="p-0 text-center text-[13px] text-[#fff0cc]">2</td>
          <td colSpan={13} />
        </tr>
        <tr className="text-base leading-5">
          <th scope="row" className={`h-[26px] ${rowHead1}`}>2</th>
          <td className="border-t border-[#bfbfbf] bg-[#aeaaa9] px-[3px] py-0 font-['DejaVu_Sans',sans-serif]">Öğrenci</td>
          <td className="border-t border-[#bfbfbf] bg-[#aeaaa9] p-0 text-center font-['DejaVu_Sans',sans-serif]">Notu</td>
          <td className="border-t border-r-2 border-[#bfbfbf] bg-[#aeaaa9] px-[3px] py-0 font-['DejaVu_Sans',sans-serif]">Performans</td>
          <td colSpan={13} />
        </tr>
        {students.map(([name, grade], i) => {
          const fail = grade < 40;
          return (
            <tr key={name} className="text-[14px] leading-5">
              <th scope="row" className={`h-7 ${rowHead1}`}>{i + 3}</th>
              <td className="border-b border-[#bfbfbf] px-[3px] py-0 font-['DejaVu_Sans',sans-serif]">{name}</td>
              <td className="border-r border-b border-[#bfbfbf] p-0 text-center font-['DejaVu_Sans',sans-serif]">{grade}</td>
              <td className="border-r-2 border-b border-[#bfbfbf] p-0 pb-1">
                <div className="flex items-center gap-[5px] pl-[3px]">
                  <span className={`h-[14px] ${fail ? "bg-[#ff0000]" : "bg-[#1f4e78]"}`} style={{ width: grade * PX_PER_POINT }} />
                  <span className={`font-['Liberation_Serif',serif] text-[17px] font-bold ${fail ? "text-[#ff0000]" : "text-[#1f4e78]"}`}>
                    {grade}%
                  </span>
                </div>
              </td>
              <td colSpan={13} />
            </tr>
          );
        })}
      </tbody>
    </table>
  );
}

const columns2 = [..."ABCDEFGHIJKLMNOPQRSTUVWXYZ", "AA", "AB", "AC", "AD"];

function EmptySheet() {
  return (
    <table className="w-[1946px] table-fixed border-separate border-spacing-0 text-[13px] leading-[18px] text-black">
      <colgroup>
        <col className="w-[26px]" />
        {columns2.map((c) => (
          <col key={c} className="w-16" />
        ))}
      </colgroup>
      <thead>
        <tr>
          <Corner />
          {columns2.map((c) => (
            <th key={c} scope="col" className={`h-5 border-b border-b-[#999] bg-[#e6e6e6] p-0 pr-0.5 font-normal ${colLine}`}>{c}</th>
          ))}
        </tr>
      </thead>
      <tbody>
        {Array.from({ length: 13 }, (_, r) => (
          <tr key={r}>
            <th scope="row" className={`h-5 border-r border-r-[#999] bg-[#e6e6e6] p-0 font-normal ${rowLine}`}>{r + 1}</th>
            {columns2.map((c) => (
              <td key={c} className="border-r border-b border-[#d4d4d4] p-0" />
            ))}
          </tr>
        ))}
      </tbody>
    </table>
  );
}

function SheetArea({ thumb, children }: Kids & { thumb: string }) {
  return (
    <div className="flex min-h-0 flex-1 bg-[#e6e6e6] pr-[2px]">
      <div className="relative flex-1 overflow-hidden bg-[linear-gradient(#e6e6e6_20px,#fff_20px)]">
        {children}
        <div className="absolute top-5 right-0 bottom-0 w-px bg-[#999]" />
      </div>
      <VScroll thumb={thumb} />
    </div>
  );
}

/* ---------- the two windows ---------- */

function ViewRibbon() {
  return (
    <Ribbon>
      <Group label="Çalışma Kitabı Görünümleri" width="w-[227px] pl-1">
        <Big width="w-[45px]" active icon={<NormalViewIcon />} lines={["Normal"]} />
        <Big width="w-[63px]" icon={<PageBreakIcon />} lines={["Sayfa Sonu", "Önizleme"]} />
        <Big width="w-[43px]" icon={<PageLayoutIcon />} lines={["Sayfa", "Düzeni"]} />
        <Big width="w-[68px]" icon={<CustomViewIcon />} lines={["Özel", "Görünümler"]} />
      </Group>
      <Group label="Göster" width="w-[230px]">
        <div className="grid grid-cols-[110px_1fr] pt-1 pl-[7px]">
          <Check label="Cetvel" checked disabled />
          <Check label="Formül Çubuğu" checked />
          <Check label="Kılavuz Çizgileri" />
          <Check label="Başlıklar" checked />
        </div>
      </Group>
      <Group label="Yakınlaştır" width="w-[168px] pl-1">
        <Big width="w-[58px]" icon={<GlassIcon />} lines={["Yakınlaştır"]} />
        <Big width="w-[44px]" icon={<Zoom100Icon />} lines={["%100"]} />
        <Big width="w-[58px]" icon={<ZoomSelIcon />} lines={["Seçimi", "Yakınlaştır"]} />
      </Group>
      <Group label="Pencere" width="w-[481px] pl-1">
        <Big width="w-[47px]" icon={<NewWindowIcon />} lines={["Yeni", "Pencere"]} />
        <Big width="w-[50px]" icon={<ArrangeIcon />} lines={["Tümünü", "Yerleştir"]} />
        <Big width="w-[56px]" icon={<FreezeIcon />} lines={["Bölmeleri", "Dondur"]} caret />
        <div className="w-[67px] pl-[3px]">
          <Small icon={<SplitIcon />} text="Böl" />
          <Small icon={<HideIcon />} text="Gizle" />
          <Small icon={<ShowIcon />} text="Göster" />
        </div>
        <Sep cls="mt-[7px] h-[55px]" />
        <div className="w-[174px] pl-[7px]">
          <Small icon={<SideBySideIcon />} text="Yan Yana Görüntüle" />
          <Small icon={<SideBySideIcon c="#b5adb5" kind={1} />} text="Zaman Uyumlu Kaydırma" disabled />
          <Small icon={<SideBySideIcon c="#b5adb5" kind={2} />} text="Pencere Konumunu Sıfırla" disabled />
        </div>
        <Sep cls="mt-[7px] h-[55px]" />
        <Big width="w-[80px]" icon={<SwitchIcon />} lines={["Pencerelerde", "Geçiş Yap"]} caret />
      </Group>
      <Group label="Makrolar" width="w-[60px]">
        <Big width="w-full" icon={<MacroIcon />} lines={["Makrolar"]} caret />
      </Group>
    </Ribbon>
  );
}

const styles: [string, string][] = [
  ["Normal", "bg-white text-black outline-3 outline-[#c6c6c6]"],
  ["İyi", "bg-[#c6efce] text-[#006100]"],
  ["Kötü", "bg-[#ffc7ce] text-[#9c0006]"],
  ["Nötr", "bg-[#ffeb9c] text-[#9c6500]"],
  ["Açıklama Me...", "italic text-[#7f7f7f]"],
  ["Bağlı Hücre", "border-b-3 border-double border-[#ff8001] text-[#fa7d00]"],
  ["Çıkış", "border border-[#3f3f3f] bg-[#f2f2f2] font-bold text-[#3f3f3f]"],
  ["Giriş", "border border-[#7f7f7f] bg-[#ffcc99] text-[#3f3f76]"],
];

function HomeRibbon() {
  return (
    <Ribbon>
      <Group label="Pano" width="w-[157px]" launcher>
        <Big width="w-[51px]" icon={<PasteIcon />} lines={["Yapıştır"]} caret />
        <div>
          <Small icon={<CutIcon />} text="Kes" />
          <Small icon={<CopyIcon />} text="Kopyala" caret="ml-1" />
          <Small icon={<BrushIcon />} text="Biçim Boyacısı" />
        </div>
      </Group>
      <Group label="Yazı Tipi" width="w-[206px]" launcher>
        <div className="pt-[7px] pl-1">
          <div className="flex h-[23px] items-center">
            <Combo label="Yazı Tipi" value="Calibri Light" width="w-[112px]" />
            <Combo label="Yazı Boyutu" value="11" width="-ml-px w-[43px]" />
            <Tool label="Yazı Tipi Boyutunu Artır" width="w-7"><GrowFont up /></Tool>
            <Tool label="Yazı Tipi Boyutunu Azalt" width="w-[22px]"><GrowFont /></Tool>
          </div>
          <div className="mt-[9px] flex h-[23px] items-center">
            <Tool label="Kalın" width="w-[22px]"><b>K</b></Tool>
            <Tool label="İtalik" width="w-[22px]"><b className="italic">T</b></Tool>
            <Tool label="Altı Çizili" width="w-[22px]"><b className="border-b border-[#444] leading-[14px]">A</b></Tool>
            <Tool label="Altı Çizili seçenekleri" width="w-3"><Caret /></Tool>
            <Sep cls="mx-[3px] h-[22px]" />
            <Tool label="Kenarlıklar" width="w-6"><BordersIcon /></Tool>
            <Tool label="Kenarlık seçenekleri" width="w-[10px]"><Caret /></Tool>
            <Sep cls="mx-[5px] h-[22px]" />
            <Tool label="Dolgu Rengi" width="w-[22px]"><FillIcon /></Tool>
            <Tool label="Dolgu seçenekleri" width="w-[10px]"><Caret /></Tool>
            <Tool label="Yazı Tipi Rengi" width="w-6"><FontColorIcon /></Tool>
            <Tool label="Yazı rengi seçenekleri" width="w-[10px]"><Caret /></Tool>
          </div>
        </div>
      </Group>
      <Group label="Hizalama" width="w-[267px]" launcher>
        <div className="w-[75px] pt-[7px] pl-1">
          <div className="flex">
            <Tool label="Üste Hizala" width="w-[22px]"><LinesIcon d={vTop} /></Tool>
            <Tool label="Ortaya Hizala" width="w-[22px]"><LinesIcon d={vMid} /></Tool>
            <Tool label="Alta Hizala" width="w-[22px]" active><LinesIcon d={vBot} /></Tool>
          </div>
          <div className="mt-[9px] flex">
            <Tool label="Sola Hizala" width="w-[22px]"><LinesIcon d={hLeft} /></Tool>
            <Tool label="Ortala" width="w-[22px]"><LinesIcon d={hMid} /></Tool>
            <Tool label="Sağa Hizala" width="w-[22px]"><LinesIcon d={hRight} /></Tool>
          </div>
        </div>
        <Sep cls="mt-[7px] h-[55px]" />
        <div className="w-[51px] pt-[7px] pl-[3px]">
          <div className="flex">
            <Tool label="Yönlendirme" width="w-[22px]"><OrientIcon /></Tool>
            <Tool label="Yönlendirme seçenekleri" width="w-3"><Caret /></Tool>
          </div>
          <div className="mt-[9px] flex">
            <Tool label="Girintiyi Azalt" width="w-[22px]"><IndentIcon /></Tool>
            <Tool label="Girintiyi Artır" width="w-[22px]"><IndentIcon right /></Tool>
          </div>
        </div>
        <Sep cls="mt-[7px] h-[55px]" />
        <div className="flex flex-col gap-2 pt-2 pl-[7px]">
          <Small icon={<WrapIcon />} text="Metni Kaydır" />
          <Small icon={<MergeIcon />} text="Birleştir ve Ortala" caret="ml-px" />
        </div>
      </Group>
      <Group label="Sayı" width="w-[139px]" launcher>
        <div className="pt-[7px] pl-1">
          <Combo label="Sayı Biçimi" value="Genel" width="w-[132px]" />
          <div className="mt-[9px] flex items-center">
            <Tool label="Muhasebe Sayı Biçimi" width="w-[22px]"><MoneyIcon /></Tool>
            <Tool label="Para birimi seçenekleri" width="w-[10px]"><Caret /></Tool>
            <Tool label="Yüzde" width="w-[26px]"><span className="text-base">%</span></Tool>
            <Tool label="Virgül" width="w-[18px]"><b className="pb-3 text-2xl leading-4">,</b></Tool>
            <Sep cls="mr-1 ml-1.5 h-[22px]" />
            <Tool label="Ondalık Artır" width="w-[22px]"><DecimalIcon more /></Tool>
            <Tool label="Ondalık Azalt" width="w-[22px]"><DecimalIcon /></Tool>
          </div>
        </div>
      </Group>
      <Group label="Stiller" width="w-[616px] pl-[3px]">
        <Big width="w-[91px]" icon={<CondIcon />} lines={["Koşullu", "Biçimlendirme"]} caret />
        <Big width="w-[74px]" icon={<TableFmtIcon />} lines={["Tablo Olarak", "Biçimlendir"]} caret />
        <div className="mt-[3px] flex h-[62px] border border-[#ababab] bg-white">
          <div className="grid w-[425px] grid-cols-[repeat(4,100px)] content-start gap-1.5 px-[3px] pt-[5px] text-[13px]">
            {styles.map(([name, cls]) => (
              <button key={name} className={`h-[22px] px-1 text-left leading-[18px] whitespace-nowrap ${cls}`}>{name}</button>
            ))}
          </div>
          <div className="grid w-[14px] grid-rows-3 divide-y divide-[#ababab] border-l border-[#ababab]">
            <button aria-label="Önceki stiller" className="flex items-center justify-center bg-[#e1e1e1]">
              <Svg w={5} h={3}><path d="M2 0h1v1h1v1h1v1h-5v-1h1v-1h1z" fill="#b0b0b0" /></Svg>
            </button>
            <button aria-label="Sonraki stiller" className="flex items-center justify-center"><Caret /></button>
            <button aria-label="Tüm stiller" className="flex flex-col items-center justify-center gap-0.5">
              <span className="h-px w-[7px] bg-[#666]" />
              <Caret />
            </button>
          </div>
        </div>
      </Group>
      <Group label="Hücreler" width="w-[134px] pl-[3px]">
        <Big width="w-[42px]" icon={<InsertIcon />} lines={["Ekle"]} caret />
        <Big width="w-[42px]" icon={<DeleteIcon />} lines={["Sil"]} caret />
        <Big width="w-[42px]" icon={<FormatIcon />} lines={["Biçim"]} caret />
      </Group>
      <Group label="Düzenleme" width="w-[263px]">
        <div className="w-[138px] pl-[7px]">
          <Small icon={<SigmaIcon />} text="Otomatik Toplam" caret="ml-0.5" />
          <Small icon={<FillDownIcon />} text="Doldur" caret="" />
          <Small icon={<EraserIcon />} text="Temizle" caret="" />
        </div>
        <Big width="w-[80px]" icon={<SortIcon />} lines={["Sırala ve Filtre", "Uygula"]} caret />
        <Big width="w-[41px]" icon={<GlassIcon color={B} flip />} lines={["Bul ve", "Seç"]} caret />
      </Group>
    </Ribbon>
  );
}

export default function App() {
  return (
    <div className="flex h-screen min-h-[800px] flex-col overflow-hidden bg-[#e6e6e6] font-['Open_Sans','Noto_Sans',sans-serif] text-[12px] leading-4">
      <main className="relative z-10 flex h-1/2 min-h-0 shrink-0 flex-col border-b border-[#444] shadow-[0_2px_6px_rgba(0,0,0,0.5)]">
        <TitleBar title="000391-bar-grafik-ornegi.xlsx" active="Görünüm" />
        <ViewRibbon />
        <FormulaBar cell="C24" />
        <SheetArea thumb="h-[129px]">
          <GradeSheet />
          <svg width="15" height="15" viewBox="0 0 15 15" className="absolute top-[78px] left-[1537px]" aria-hidden="true">
            <path d="M5 1h5v4h4v5h-4v4h-5v-4h-4v-5h4z" fill="#fff" stroke="#000" strokeWidth="1.500" />
          </svg>
        </SheetArea>
        <SheetBar
          name="Bar-Grafik"
          tabCls="w-[86px] bg-[linear-gradient(to_bottom,#fff,#ffff99)] shadow-[inset_0_0_0_2px_#fff]"
          plusGap="ml-8"
          thumbGap="mr-0.5 pr-[47px]"
        />
        <StatusBar />
        <div className="h-px shrink-0 bg-[#217346]" />
      </main>
      <section aria-label="Kitap3" className="flex h-1/2 min-h-0 shrink-0 flex-col">
        <TitleBar title="Kitap3" dim active="Giriş" />
        <HomeRibbon />
        <FormulaBar cell="" />
        <SheetArea thumb="h-[82px]">
          <EmptySheet />
        </SheetArea>
        <SheetBar name="Sayfa1" tabCls="w-16 bg-white" plusGap="ml-8" thumbGap="mr-0.5 pr-[50px]" />
        <StatusBar />
      </section>
    </div>
  );
}
